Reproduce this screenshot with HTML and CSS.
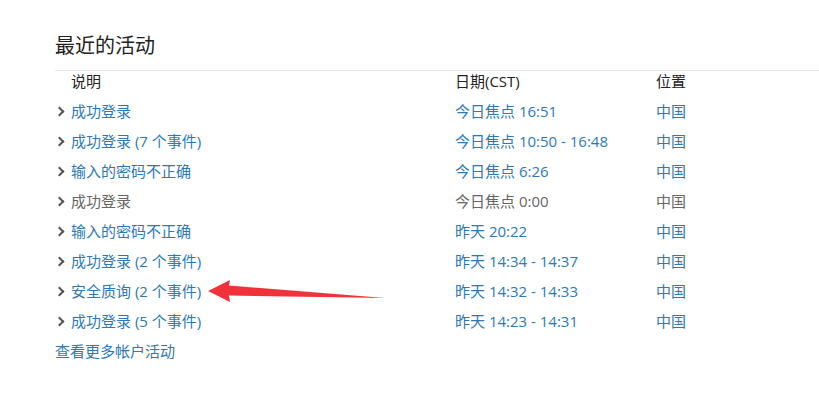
FILE: index.html
```html
<!DOCTYPE html>
<html lang="zh-CN">
<head>
    <meta charset="UTF-8">
    <meta name="viewport" content="width=device-width, initial-scale=1.0">
    <title>最近的活动</title>
    <link rel="stylesheet" href="styles.css">
</head>
<body>
    <section class="activity">
      <h2 class="title">最近的活动</h2>

      <div class="table">
        <div class="row head">
          <span class="desc">说明</span>
          <span class="date">日期(CST)</span>
          <span class="place">位置</span>
        </div>

        <div class="row link">
          <span class="desc"><i class="chev"></i>成功登录</span>
          <span class="date">今日焦点 16:51</span>
          <span class="place">中国</span>
        </div>
        <div class="row link">
          <span class="desc"><i class="chev"></i>成功登录 (7 个事件)</span>
          <span class="date">今日焦点 10:50 - 16:48</span>
          <span class="place">中国</span>
        </div>
        <div class="row link">
          <span class="desc"><i class="chev"></i>输入的密码不正确</span>
          <span class="date">今日焦点 6:26</span>
          <span class="place">中国</span>
        </div>
        <div class="row muted">
          <span class="desc"><i class="chev"></i>成功登录</span>
          <span class="date">今日焦点 0:00</span>
          <span class="place">中国</span>
        </div>
        <div class="row link">
          <span class="desc"><i class="chev"></i>输入的密码不正确</span>
          <span class="date">昨天 20:22</span>
          <span class="place">中国</span>
        </div>
        <div class="row link">
          <span class="desc"><i class="chev"></i>成功登录 (2 个事件)</span>
          <span class="date">昨天 14:34 - 14:37</span>
          <span class="place">中国</span>
        </div>
        <div class="row link">
          <span class="desc"><i class="chev"></i>安全质询 (2 个事件)</span>
          <span class="date">昨天 14:32 - 14:33</span>
          <span class="place">中国</span>
        </div>
        <div class="row link">
          <span class="desc"><i class="chev"></i>成功登录 (5 个事件)</span>
          <span class="date">昨天 14:23 - 14:31</span>
          <span class="place">中国</span>
        </div>
      </div>

      <a class="more" href="#">查看更多帐户活动</a>

      <!-- red annotation arrow -->
      <svg class="arrow" width="185" height="28" viewBox="0 0 185 28">
        <path d="M3 13 L25 2 L24 7.5 L180 20 L24 17.5 L25 24 Z" fill="#f0333a"/>
      </svg>
    </section>
</body>
</html>
```

FILE: styles.css
```css
body {
  margin: 0;
  background: #fff;
  font-family: "Open Sans", "Noto Sans CJK SC", sans-serif;
  font-size: 15px;
  color: #333;
}
.activity {
  position: relative;
  padding: 31px 0 0 55px;
}
.title {
  margin: 0;
  font-size: 20px;
  font-weight: normal;
  line-height: 30px;
  color: #222;
  padding-bottom: 9px;
  border-bottom: 1px solid #e6e6e6;
}
.row {
  display: grid;
  grid-template-columns: 400px 201px 1fr;
  height: 30px;
  line-height: 30px;
  white-space: nowrap;
}
.row.head {
  height: 25px;
  line-height: 20px;
  color: #222;
}
.row.head .desc {
  display: block;
  padding-left: 16px;
}
.desc {
  display: flex;
  align-items: center;
}
.chev {
  display: inline-block;
  width: 16px;
  height: 30px;
  position: relative;
}
.chev::before {
  content: "";
  position: absolute;
  left: 1px;
  top: 12px;
  width: 5px;
  height: 5px;
  border-top: 2px solid #555;
  border-right: 2px solid #555;
  transform: rotate(45deg);
}
.link {
  color: #2c79b6;
}
.muted {
  color: #666;
}
.more {
  display: block;
  line-height: 30px;
  color: #2c79b6;
  text-decoration: none;
}
.arrow {
  position: absolute;
  left: 205px;
  top: 278px;
}
```
